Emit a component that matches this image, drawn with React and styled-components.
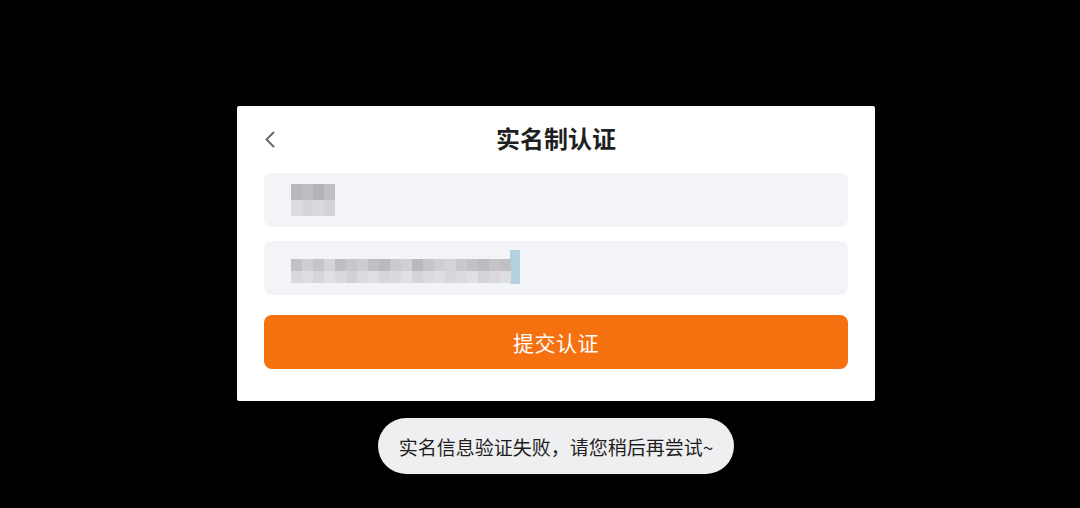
import React from "react";
import styled, { createGlobalStyle } from "styled-components";

const Global = createGlobalStyle`
  html, body { margin: 0; padding: 0; background: #000; }
  body {
    font-family: "Noto Sans CJK SC", "Noto Sans", sans-serif;
    -webkit-font-smoothing: antialiased;
  }
`;

const Screen = styled.div`
  width: 1080px;
  height: 508px;
  background: #000;
  display: flex;
  flex-direction: column;
  align-items: center;
  padding: 106px 0 0 32px;
  box-sizing: border-box;
  overflow: hidden;
`;

const Dialog = styled.div`
  width: 638px;
  background: #fff;
  border-radius: 2px;
  padding: 0 27px 32px;
  box-sizing: border-box;
  display: flex;
  flex-direction: column;
`;

const Header = styled.div`
  position: relative;
  height: 62px;
  display: flex;
  align-items: center;
  justify-content: center;
`;

const BackButton = styled.button`
  position: absolute;
  left: -4px;
  top: 22px;
  width: 20px;
  height: 22px;
  padding: 0;
  border: 0;
  background: none;
  display: flex;
  align-items: center;
  justify-content: center;
`;

const Title = styled.h1`
  margin: 0;
  font-size: 24px;
  font-weight: 700;
  color: #1f1f1f;
`;

const Form = styled.div`
  margin-top: 5px;
  display: flex;
  flex-direction: column;
  gap: 14px;
`;

const Field = styled.div`
  height: 54px;
  border-radius: 8px;
  background: #f3f4f7;
  display: flex;
  align-items: center;
  padding-left: 27px;
`;

const Mosaic = styled.div`
  display: grid;
  grid-template-columns: repeat(${(p) => p.$cols}, ${(p) => p.$cell}px);
  grid-auto-rows: ${(p) => p.$rowH}px;
  margin-top: ${(p) => p.$shift || 0}px;
  filter: blur(0.6px);
`;

const Cell = styled.div`
  background: ${(p) => p.$c};
`;

const Caret = styled.div`
  width: 10px;
  height: 34px;
  background: #b5d0de;
  margin-left: -1px;
  margin-top: -2px;
`;

const Submit = styled.button`
  margin-top: 6px;
  height: 54px;
  border: 0;
  border-radius: 8px;
  background: #f5700f;
  color: #fff;
  font-family: inherit;
  font-size: 21px;
  font-weight: 400;
  letter-spacing: 0.5px;
`;

const Toast = styled.div`
  margin-top: 17px;
  width: 356px;
  height: 56px;
  border-radius: 28px;
  background: #efeff1;
  display: flex;
  align-items: center;
  justify-content: center;
  font-size: 19px;
  color: #1e1e1e;
`;

// mosaic shades for the masked entries, row by row
const nameRows = [
  ["#b9b9bd", "#bdbdc1", "#b4b4b8", "#c0c0c4"],
  ["#dcdce0", "#d6d6da", "#dadade", "#d4d4d8"],
];

const idRows = [
  ["#c2c2c6", "#cfcfd3", "#c6c6ca", "#d5d5d9", "#bfbfc3", "#c8c8cc", "#cdcdd1", "#c0c0c4", "#bbbbbf", "#cbcbcf", "#d0d0d4", "#b9b9bd", "#c6c6ca", "#cfcfd3", "#d4d4d8", "#c9c9cd", "#c2c2c6", "#bcbcc0", "#c5c5c9", "#c0c0c4"],
  ["#d9d9dd", "#dedee2", "#d6d6da", "#e0e0e4", "#dadade", "#d2d2d6", "#dcdce0", "#dfdfe3", "#d7d7db", "#dadade", "#e1e1e5", "#d5d5d9", "#dcdce0", "#dfdfe3", "#d8d8dc", "#dbdbdf", "#e0e0e4", "#d4d4d8", "#d9d9dd", "#dedee2"],
];

function MaskedText({ rows, cell, rowH, shift }) {
  return (
    <Mosaic $cols={rows[0].length} $cell={cell} $rowH={rowH} $shift={shift}>
      {rows.flatMap((r, i) => r.map((c, j) => <Cell key={`${i}-${j}`} $c={c} />))}
    </Mosaic>
  );
}

function ChevronLeft() {
  return (
    <svg width="12" height="17" viewBox="0 0 12 17" fill="none">
      <path d="M9.5 1.5 L2.5 8.5 L9.5 15.5" stroke="#6a6a6a" strokeWidth="2" strokeLinecap="round" strokeLinejoin="round" />
    </svg>
  );
}

export default function App() {
  return (
    <>
      <Global />
      <Screen>
        <Dialog>
          <Header>
            <BackButton aria-label="返回">
              <ChevronLeft />
            </BackButton>
            <Title>实名制认证</Title>
          </Header>
          <Form>
            <Field>
              <MaskedText rows={nameRows} cell={11} rowH={16} />
            </Field>
            <Field>
              <MaskedText rows={idRows} cell={11} rowH={12} shift={6} />
              <Caret />
            </Field>
            <Submit>提交认证</Submit>
          </Form>
        </Dialog>
        <Toast>实名信息验证失败，请您稍后再尝试~</Toast>
      </Screen>
    </>
  );
}
